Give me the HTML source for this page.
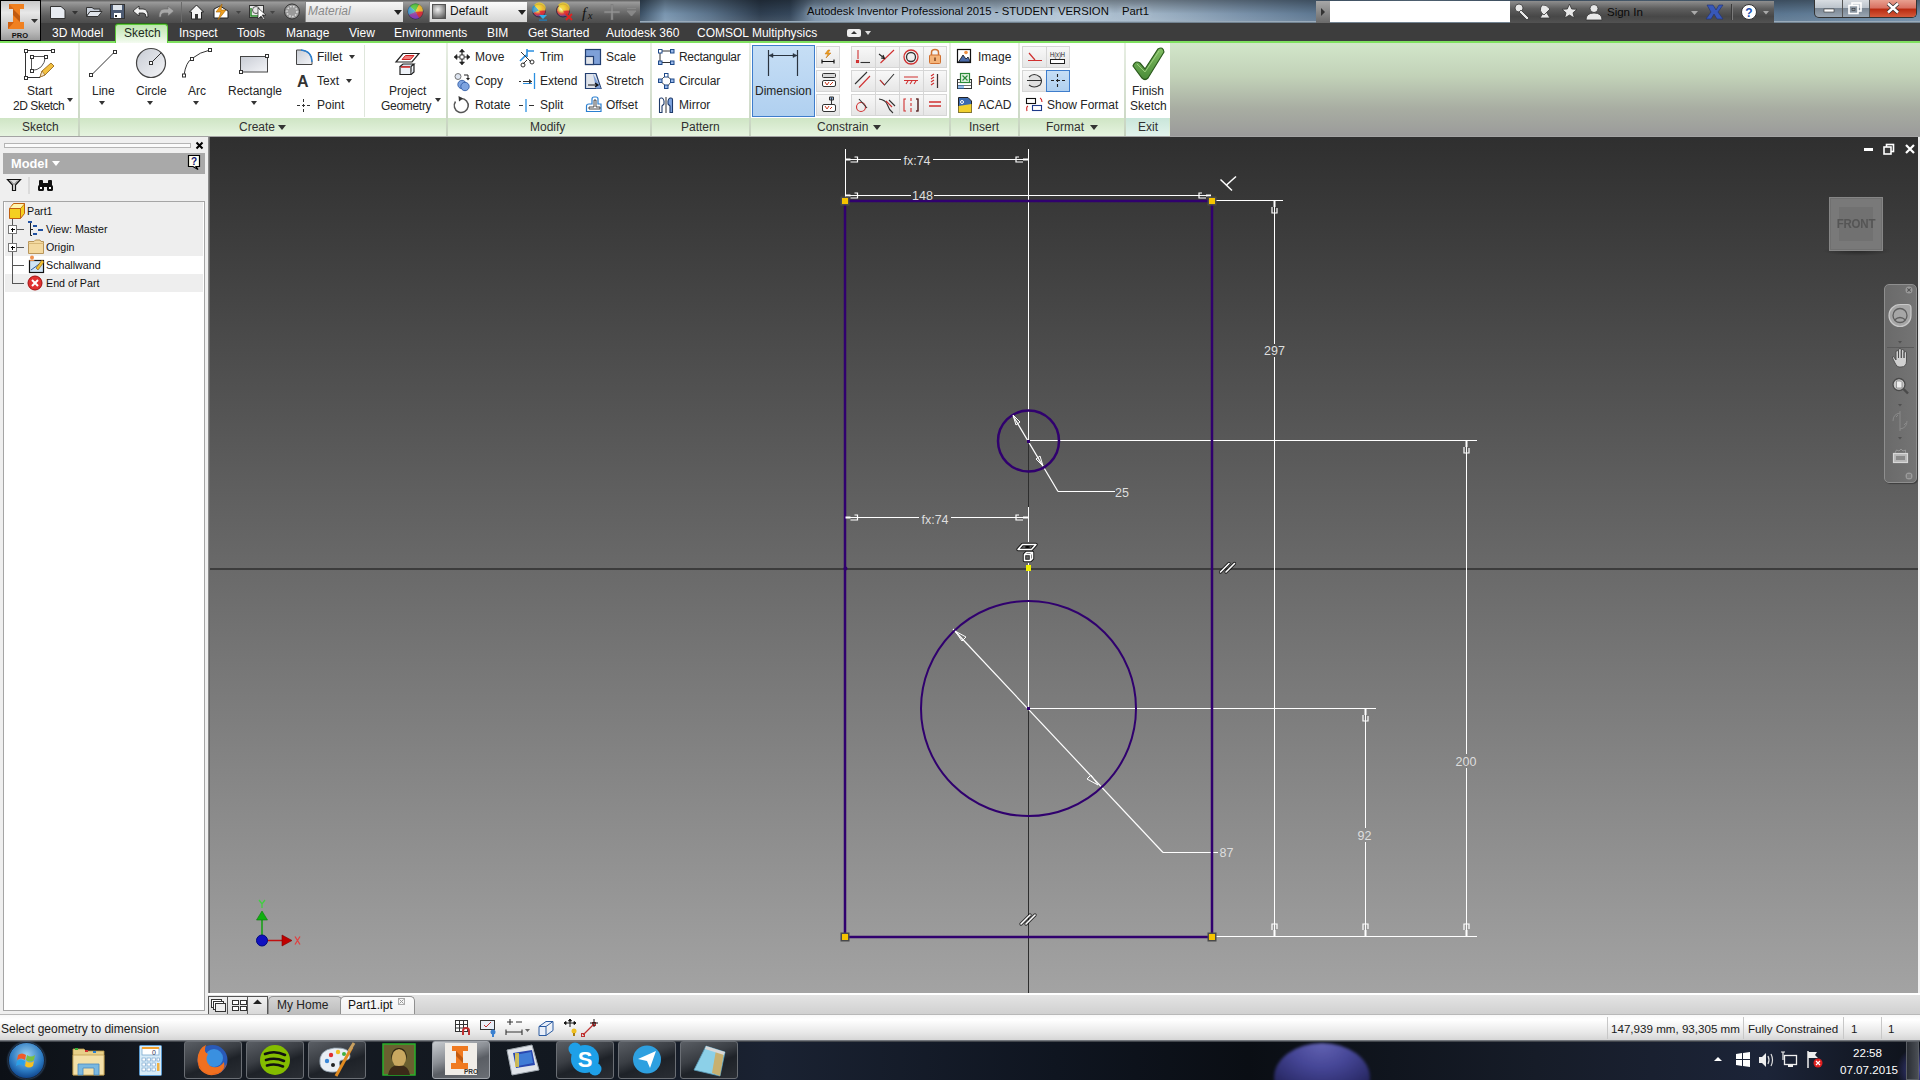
<!DOCTYPE html>
<html><head><meta charset="utf-8">
<style>
*{margin:0;padding:0;box-sizing:border-box}
html,body{width:1920px;height:1080px;overflow:hidden;font-family:"Liberation Sans",sans-serif;background:#000;position:relative}
.a{position:absolute}
svg{overflow:visible}
.tab{position:absolute;top:24px;height:19px;line-height:19px;font-size:12px;color:#fff;white-space:nowrap}
.t{position:absolute;font-size:12px;color:#252525;white-space:nowrap;line-height:15px;height:15px;margin-top:1px}
.lbl{position:absolute;top:118px;height:18px;line-height:18px;font-size:12px;color:#303030;white-space:nowrap}
.sep{position:absolute;width:1px;top:45px;height:72px;background:#dfe6dc}
.psep{position:absolute;width:2px;top:43px;height:93px;background:linear-gradient(#e8efe4,#c6d3bf)}
.dd{position:absolute;width:0;height:0;border-left:3.5px solid transparent;border-right:3.5px solid transparent;border-top:4px solid #333}
.sb{position:absolute;width:24px;height:22px;background:linear-gradient(#f8f8f8,#e6e6e6);border:1px solid #d6d6d6}
</style></head><body>

<!-- title bar -->
<div class="a" style="left:0;top:0;width:1920px;height:23px;background:linear-gradient(90deg,#3b4e62 0%,#2a3a4b 40%,#5c7893 60%,#3a4d61 70%,#5e7c98 82%,#4f6a85 92%,#6f8fad 100%)"></div>
<div class="a" style="left:640px;top:0;width:1280px;height:23px;background:linear-gradient(90deg,#3a4f64 0px,#7a96b0 25px,#5a728a 70px,#2e3e50 120px,#34465a 150px,#7890a8 175px,#a2b6c8 230px,#98aec2 330px,#b4c6d6 420px,#a0b4c6 510px,#7a92aa 600px,#5c7690 680px,#7690a8 780px,#556e88 900px,#6a86a0 1000px,#5b7690 1140px,#6e8ba6 1280px)"></div>
<div class="a" style="left:640px;top:0;width:1280px;height:23px;background:linear-gradient(rgba(0,0,0,.35),rgba(0,0,0,0) 60%,rgba(255,255,255,.1))"></div>
<div class="a" style="left:0;top:21px;width:1920px;height:2px;background:linear-gradient(#aebfce,#5f6f7d)"></div>
<div class="a" style="left:807px;top:5px;font-size:11.3px;color:#0a0a0a;white-space:nowrap;text-shadow:0 0 6px rgba(220,232,245,.8)">Autodesk Inventor Professional 2015 - STUDENT VERSION</div>
<div class="a" style="left:1122px;top:5px;font-size:11.3px;color:#0a0a0a;white-space:nowrap;text-shadow:0 0 6px rgba(220,232,245,.8)">Part1</div>
<!-- QAT -->
<div class="a" style="left:40px;top:0;width:600px;height:23px;background:linear-gradient(#5a5a5a,#9a9a9a 10%,#7c7c7c 35%,#5c5c5c 70%,#4c4c4c)"></div>
<div class="a" style="left:181px;top:2px;width:1px;height:20px;background:#2c2c2c;border-right:1px solid #6a6a6a"></div>
<!-- QAT icons -->
<svg class="a" style="left:40px;top:0" width="600" height="23" viewBox="40 0 600 23">
<g stroke="#333" stroke-width="1">
<path d="M50.5 6.5 H61 L65 10 V18.5 H50.5 Z" fill="#e8ecf2"/>
<path d="M86.5 7.5 H92 L94 9 H100 V12 H90 L86.5 16.5 Z" fill="#c9d0da"/>
<path d="M86.5 16.5 L90 11.5 H102 L98 16.5 Z" fill="#dfe4ea"/>
<rect x="110.5" y="4.5" width="14" height="14" fill="#4d5b73"/>
</g>
<rect x="113" y="5" width="9" height="5" fill="#dde3ea"/><rect x="114" y="13" width="7" height="5" fill="#fff"/><rect x="115" y="15" width="2" height="2" fill="#222"/>
<path d="M72 11 H78 L75 14.5 Z" fill="#333"/>
<path d="M139 6 L133 11 L139 16 V13 H143 Q146 13 146 17 H148 Q148 9 143 9 H139 Z" fill="#f2f2f2" stroke="#222" stroke-width="0.8"/>
<path d="M168 6 L174 11 L168 16 V13 H164 Q161 13 161 17 H159 Q159 9 164 9 H168 Z" fill="#a8a8a8" stroke="#6a6a6a" stroke-width="0.6"/>
<path d="M189.5 12 L196.5 5 L203.5 12 H201.5 V19 H191.5 V12 Z" fill="#f4f4f4" stroke="#222" stroke-width="1"/>
<rect x="195" y="14" width="3" height="5" fill="#333"/>
<path d="M214 9 L220 6 L228 11 V18 H214 Z" fill="#fff" stroke="#222" stroke-width="1"/>
<path d="M222 4 L216 12 H221 L218 20 L226 10 H221 Z" fill="#f0a020" stroke="#a06000" stroke-width="0.6"/>
<path d="M236 11 H241 L238.5 14 Z" fill="#444"/>
<rect x="249.5" y="5.5" width="14" height="12" fill="#e8e8e8" stroke="#333"/>
<path d="M251 8 V16 H258" stroke="#2a8a2a" stroke-width="1.5" fill="none"/>
<circle cx="256" cy="10" r="3.5" fill="none" stroke="#555"/>
<path d="M258 8 L258 19 L261 16 L264 20 L265 19 L262 15 L266 15 Z" fill="#fff" stroke="#222" stroke-width="0.7"/>
<path d="M270 11 H275 L272.5 14 Z" fill="#444"/>
<circle cx="292" cy="11.5" r="7.5" fill="#9a9a9a" stroke="#333"/>
<circle cx="292" cy="11.5" r="5" fill="none" stroke="#e0e0e0" stroke-dasharray="1.5 1.5" stroke-width="1.5"/>
</g>
</svg>
<!-- material dropdown -->
<div class="a" style="left:305px;top:2px;width:98px;height:20px;background:linear-gradient(#f6f6f6,#d4d4d4);border-left:1px solid #888"></div>
<div class="a" style="left:308px;top:4px;font-size:12px;font-style:italic;color:#8a8a8a">Material</div>
<div class="dd" style="left:394px;top:10px;border-top-color:#222;border-left-width:4px;border-right-width:4px;border-top-width:5px"></div>
<svg class="a" style="left:405px;top:2px" width="22" height="20">
<defs><radialGradient id="cw" cx=".4" cy=".35" r=".7"><stop offset="0" stop-color="#fff"/><stop offset=".3" stop-color="#e8e060"/><stop offset=".6" stop-color="#e04040"/><stop offset="1" stop-color="#3040c0"/></radialGradient></defs>
<circle cx="10.5" cy="9.5" r="7.5" fill="url(#cw)" stroke="#223" stroke-width=".8"/>
<path d="M10.5 9.5 L18 9.5 A7.5 7.5 0 0 1 14 16 Z" fill="#e03030" opacity=".8"/>
<path d="M10.5 9.5 L14 16 A7.5 7.5 0 0 1 4 13 Z" fill="#8040c0" opacity=".8"/>
<path d="M10.5 9.5 L4 13 A7.5 7.5 0 0 1 5 4 Z" fill="#30a0e0" opacity=".8"/>
<path d="M10.5 9.5 L5 4 A7.5 7.5 0 0 1 14 2.5 Z" fill="#40c040" opacity=".8"/>
<path d="M10.5 9.5 L14 2.5 A7.5 7.5 0 0 1 18 9.5 Z" fill="#f0d030" opacity=".8"/>
</svg>
<div class="a" style="left:429px;top:2px;width:98px;height:20px;background:linear-gradient(#fbfbfb,#d6d6d6);border-left:1px solid #888"></div>
<div class="a" style="left:432px;top:4px;width:14px;height:15px;background:radial-gradient(circle at 40% 35%,#f0f0f0,#8a8a8a 60%,#4a4a4a);border:1px solid #555"></div>
<div class="a" style="left:450px;top:4px;font-size:12px;color:#111">Default</div>
<div class="dd" style="left:518px;top:10px;border-top-color:#222;border-left-width:4px;border-right-width:4px;border-top-width:5px"></div>
<svg class="a" style="left:530px;top:2px" width="110" height="20">
<circle cx="9" cy="8.5" r="6.5" fill="url(#cw)" stroke="#223" stroke-width=".8"/>
<path d="M9 8.5 L15.5 8.5 A6.5 6.5 0 0 1 12 14 Z" fill="#e03030" opacity=".8"/>
<path d="M9 8.5 L3 11 A6.5 6.5 0 0 1 4 3 Z" fill="#30a0e0" opacity=".8"/>
<path d="M9 8.5 L4 3 A6.5 6.5 0 0 1 15.5 8.5 Z" fill="#f0d030" opacity=".8"/>
<path d="M9 13 H17 L13 17 Z" fill="#30b0e8"/><rect x="9" y="17.5" width="8" height="1.2" fill="#2080c0"/>
<circle cx="33" cy="8.5" r="6.5" fill="url(#cw)" stroke="#223" stroke-width=".8"/>
<path d="M33 8.5 L39.5 8.5 A6.5 6.5 0 0 1 36 14 Z" fill="#e03030" opacity=".8"/>
<path d="M33 8.5 L28 3 A6.5 6.5 0 0 1 39.5 8.5 Z" fill="#f0d030" opacity=".8"/>
<path d="M36 12 L42 18 M42 12 L36 18" stroke="#e02020" stroke-width="1.8"/>
<text x="52" y="16" font-family="Liberation Serif" font-style="italic" font-size="15" fill="#111">f</text>
<text x="58" y="17" font-family="Liberation Serif" font-style="italic" font-size="10" fill="#111">x</text>
<path d="M82 2 V18 M74 10 H90" stroke="#777" stroke-width="2.5"/><path d="M82 2.5 V17.5 M74.5 10 H89.5" stroke="#999" stroke-width="1"/>
<path d="M97 6.5 H106 M97 9 H106 L101.5 14 Z" stroke="#888" fill="#888" stroke-width="1"/>
</svg>
<!-- app button -->
<div class="a" style="left:0;top:0;width:41px;height:41px;background:linear-gradient(#c8c8c8,#e8e8e8 30%,#b8b8b8 80%,#9a9a9a);border:1px solid #000;z-index:3"></div>
<svg class="a" style="left:0;top:0;z-index:4" width="41" height="41">
<path d="M9 4 H24 V9 H20 V22 H24 V29 H8 V22 H13 V9 H9 Z" fill="#f08020"/>
<path d="M13 9 L20 16 V22 L13 15 Z" fill="#c05a10"/><path d="M9 4 L14 9 H9 Z" fill="#d86a18"/><path d="M8 29 L14 22 H8 Z" fill="#d06010"/>
<path d="M31 19 H38 L34.5 23 Z" fill="#333"/>
<text x="20" y="37.5" font-family="Liberation Sans" font-weight="bold" font-size="7.5" fill="#111" text-anchor="middle">PRO</text>
</svg>
<!-- search -->
<div class="a" style="left:1316px;top:1px;width:14px;height:22px;background:linear-gradient(#a8a8a8,#6a6a6a)"></div>
<div class="a" style="left:1321px;top:8px;width:0;height:0;border-top:4px solid transparent;border-bottom:4px solid transparent;border-left:4px solid #333"></div>
<div class="a" style="left:1330px;top:1px;width:180px;height:21px;background:#fff"></div>
<!-- infocenter -->
<div class="a" style="left:1510px;top:1px;width:264px;height:22px;background:linear-gradient(#8e8e8e,#5e5e5e 35%,#474747 70%,#525252)"></div>
<svg class="a" style="left:1510px;top:1px" width="264" height="22">
<g fill="#e8e8e8" stroke="#333" stroke-width=".8">
<circle cx="9" cy="7" r="4"/><path d="M11 9 L19 17 L17 19 L9 11 Z"/>
<path d="M30 17 L35 9 L40 17 Z"/><path d="M32 4 Q28 10 34 14 L40 8 Q36 3 32 4 Z"/>
<path d="M59.5 3 L61.7 8 L67 8.3 L63 11.8 L64.3 17 L59.5 14 L54.7 17 L56 11.8 L52 8.3 L57.3 8 Z"/>
<circle cx="84" cy="7.5" r="4"/><path d="M76 19 Q76 12 84 12 Q92 12 92 19 Z"/>
</g>
<path d="M181 10 H188 L184.5 14 Z" fill="#aaa"/>
<path d="M197 4 H203 L206 9 L209 4 H213 L208 11 L213 18 H207 L204 13 L201 18 H196 L201 11 Z" fill="#3858b8" stroke="#203070" stroke-width=".6"/>
<rect x="221" y="3" width="1" height="16" fill="#3a3a3a"/><rect x="222" y="3" width="1" height="16" fill="#7a7a7a"/>
<circle cx="239" cy="11" r="7.5" fill="#fff" stroke="#333" stroke-width="1"/>
<text x="239" y="15.5" font-family="Liberation Sans" font-weight="bold" font-size="12" fill="#2050b0" text-anchor="middle">?</text>
<path d="M253 10 H259 L256 13.5 Z" fill="#aaa"/>
</svg>
<div class="a" style="left:1607px;top:6px;font-size:11.5px;color:#0a0a0a;white-space:nowrap">Sign In</div>
<!-- window buttons -->
<div class="a" style="left:1814px;top:0;width:103px;height:18px;border:1px solid #333;border-top:none;border-radius:0 0 5px 5px;overflow:hidden;background:linear-gradient(#d8dde2,#bcc4cc 45%,#7b8794 50%,#9aa6b2)">
<div class="a" style="left:54px;top:0;width:48px;height:18px;background:linear-gradient(#e8a090,#d87060 45%,#b82a10 50%,#d86040)"></div>
<div class="a" style="left:27px;top:0;width:1px;height:18px;background:#555"></div>
<div class="a" style="left:54px;top:0;width:1px;height:18px;background:#555"></div>
</div>
<svg class="a" style="left:1814px;top:0" width="103" height="18">
<rect x="10" y="9" width="10" height="3" fill="#fff" stroke="#333" stroke-width=".6"/>
<rect x="38" y="3" width="9" height="8" fill="none" stroke="#fff" stroke-width="1.6"/>
<rect x="35" y="5.5" width="9" height="8" fill="#8a96a2" stroke="#fff" stroke-width="1.6"/>
<rect x="38" y="8.5" width="3" height="2" fill="none" stroke="#333" stroke-width=".6"/>
<path d="M74 3.5 L84 12.5 M84 3.5 L74 12.5" stroke="#333" stroke-width="4"/>
<path d="M74 3.5 L84 12.5 M84 3.5 L74 12.5" stroke="#fff" stroke-width="2.4"/>
</svg>
<!-- tab bar -->
<div class="a" style="left:0;top:23px;width:1920px;height:19px;background:#3d3d3d"></div>
<div class="a" style="left:0;top:41px;width:1920px;height:2px;background:#7fe060"></div>
<div class="a" style="left:115px;top:24px;width:53px;height:19px;background:linear-gradient(#bfe6b0,#e2f4da 70%,#f4fbf1);border:1px solid #5cc838;border-bottom:none;border-radius:3px 3px 0 0;box-shadow:0 -1px 0 #2a6a18"></div>
<div class="tab" style="left:52px">3D Model</div>
<div class="tab" style="left:124px;color:#1e2a1e">Sketch</div>
<div class="tab" style="left:179px">Inspect</div>
<div class="tab" style="left:237px">Tools</div>
<div class="tab" style="left:286px">Manage</div>
<div class="tab" style="left:349px">View</div>
<div class="tab" style="left:394px">Environments</div>
<div class="tab" style="left:487px">BIM</div>
<div class="tab" style="left:528px">Get Started</div>
<div class="tab" style="left:606px">Autodesk 360</div>
<div class="tab" style="left:697px">COMSOL Multiphysics</div>
<div class="a" style="left:847px;top:29px;width:14px;height:8px;background:#eee;border-radius:2px"></div>
<div class="a" style="left:851px;top:31px;width:0;height:0;border-left:3px solid transparent;border-right:3px solid transparent;border-bottom:3px solid #333"></div>
<div class="dd" style="left:865px;top:31px;border-top-color:#ddd"></div>

<!-- ribbon bg -->
<div class="a" style="left:0;top:43px;width:1920px;height:94px;background:linear-gradient(#d2e6ca,#c2d2b8 35%,#a8ada2 70%,#9a9a9a)"></div>
<div class="a" style="left:0;top:43px;width:1170px;height:75px;background:#fff"></div>
<div class="a" style="left:0;top:118px;width:1170px;height:18px;background:linear-gradient(#cfe5c5,#e6f4e0)"></div>
<div class="a" style="left:1126px;top:118px;width:43px;height:18px;background:linear-gradient(#c9e6da,#e2f3ec)"></div>
<div class="a" style="left:0;top:136px;width:1920px;height:1px;background:#a4a4a4"></div>
<!-- panel separators -->
<div class="psep" style="left:78px"></div>
<div class="psep" style="left:446px"></div>
<div class="psep" style="left:650px"></div>
<div class="psep" style="left:749px"></div>
<div class="psep" style="left:949px"></div>
<div class="psep" style="left:1018px"></div>
<div class="psep" style="left:1124px"></div>
<div class="sep" style="left:364px"></div>
<!-- labels -->
<div class="lbl" style="left:22px">Sketch</div>
<div class="lbl" style="left:239px">Create</div><div class="dd" style="left:278px;top:125px;border-left-width:4.5px;border-right-width:4.5px;border-top-width:5px"></div>
<div class="lbl" style="left:530px">Modify</div>
<div class="lbl" style="left:681px">Pattern</div>
<div class="lbl" style="left:817px">Constrain</div><div class="dd" style="left:873px;top:125px;border-left-width:4.5px;border-right-width:4.5px;border-top-width:5px"></div>
<div class="lbl" style="left:969px">Insert</div>
<div class="lbl" style="left:1046px">Format</div><div class="dd" style="left:1090px;top:125px;border-left-width:4.5px;border-right-width:4.5px;border-top-width:5px"></div>
<div class="lbl" style="left:1138px">Exit</div>
<!-- large button text -->
<div class="t" style="left:27px;top:83px">Start</div>
<div class="t" style="left:13px;top:98px;letter-spacing:-.45px">2D Sketch</div><div class="dd" style="left:67px;top:98px"></div>
<div class="t" style="left:92px;top:83px">Line</div><div class="dd" style="left:99px;top:101px"></div>
<div class="t" style="left:136px;top:83px">Circle</div><div class="dd" style="left:147px;top:101px"></div>
<div class="t" style="left:188px;top:83px">Arc</div><div class="dd" style="left:193px;top:101px"></div>
<div class="t" style="left:228px;top:83px">Rectangle</div><div class="dd" style="left:251px;top:101px"></div>
<div class="t" style="left:317px;top:49px">Fillet</div><div class="dd" style="left:349px;top:55px"></div>
<div class="t" style="left:317px;top:73px">Text</div><div class="dd" style="left:346px;top:79px"></div>
<div class="t" style="left:317px;top:97px">Point</div>
<div class="t" style="left:389px;top:83px">Project</div>
<div class="t" style="left:381px;top:98px;letter-spacing:-.3px">Geometry</div><div class="dd" style="left:435px;top:98px"></div>
<div class="t" style="left:475px;top:49px">Move</div>
<div class="t" style="left:475px;top:73px">Copy</div>
<div class="t" style="left:475px;top:97px">Rotate</div>
<div class="t" style="left:540px;top:49px">Trim</div>
<div class="t" style="left:540px;top:73px">Extend</div>
<div class="t" style="left:540px;top:97px">Split</div>
<div class="t" style="left:606px;top:49px">Scale</div>
<div class="t" style="left:606px;top:73px">Stretch</div>
<div class="t" style="left:606px;top:97px">Offset</div>
<div class="t" style="left:679px;top:49px;letter-spacing:-.3px">Rectangular</div>
<div class="t" style="left:679px;top:73px">Circular</div>
<div class="t" style="left:679px;top:97px">Mirror</div>
<!-- dimension button -->
<div class="a" style="left:752px;top:45px;width:63px;height:72px;background:linear-gradient(#c6def5,#b0d0f0);border:1px solid #3e7dcc"></div>
<div class="t" style="left:755px;top:83px">Dimension</div>
<!-- small button columns -->
<div class="sb" style="left:816px;top:46px"></div>
<div class="sb" style="left:816px;top:70px"></div>
<div class="sb" style="left:816px;top:94px"></div>
<div class="a" style="left:851px;top:46px;width:96px;height:22px;background:linear-gradient(#f8f8f8,#e6e6e6);border:1px solid #d6d6d6"></div>
<div class="a" style="left:851px;top:70px;width:96px;height:22px;background:linear-gradient(#f8f8f8,#e6e6e6);border:1px solid #d6d6d6"></div>
<div class="a" style="left:851px;top:94px;width:96px;height:22px;background:linear-gradient(#f8f8f8,#e6e6e6);border:1px solid #d6d6d6"></div>
<div class="a" style="left:875px;top:46px;width:1px;height:70px;background:#d6d6d6"></div>
<div class="a" style="left:899px;top:46px;width:1px;height:70px;background:#d6d6d6"></div>
<div class="a" style="left:923px;top:46px;width:1px;height:70px;background:#d6d6d6"></div>
<div class="t" style="left:978px;top:49px">Image</div>
<div class="t" style="left:978px;top:73px">Points</div>
<div class="t" style="left:978px;top:97px">ACAD</div>
<div class="a" style="left:1022px;top:46px;width:48px;height:22px;background:linear-gradient(#f8f8f8,#e6e6e6);border:1px solid #d6d6d6"></div>
<div class="a" style="left:1046px;top:46px;width:1px;height:22px;background:#d6d6d6"></div>
<div class="a" style="left:1022px;top:70px;width:25px;height:22px;background:linear-gradient(#f8f8f8,#e6e6e6);border:1px solid #d6d6d6"></div>
<div class="a" style="left:1046px;top:70px;width:24px;height:22px;background:linear-gradient(#c6def5,#b0d0f0);border:1px solid #3e7dcc"></div>
<div class="t" style="left:1047px;top:97px">Show Format</div>
<div class="t" style="left:1132px;top:83px">Finish</div>
<div class="t" style="left:1130px;top:98px">Sketch</div>
<!-- ribbon icons -->
<svg class="a" style="left:0;top:42px" width="1170" height="95" viewBox="0 42 1170 95">
<defs>
<linearGradient id="gg" x1="0" y1="0" x2="1" y2="1"><stop offset="0" stop-color="#c8ccd4"/><stop offset="1" stop-color="#f4f5f8"/></linearGradient>
<linearGradient id="gchk" x1="0" y1="0" x2="0" y2="1"><stop offset="0" stop-color="#82be64"/><stop offset="1" stop-color="#4a8c38"/></linearGradient>
</defs>
<g fill="none" stroke="#333" stroke-width="1">
<!-- start 2d sketch -->
<path d="M25.5 50.5 H52.5 M25.5 50.5 V77.5 H40"/>
<path d="M31.5 56.5 H45.5 M31.5 56.5 V70.5 Q44 70 45.5 56.5" stroke="#555"/>
<g fill="#fff"><rect x="24.5" y="49.5" width="3" height="3"/><rect x="51.5" y="49.5" width="3" height="3"/><rect x="24.5" y="76.5" width="3" height="3"/><rect x="30.5" y="55.5" width="3" height="3"/><rect x="44.5" y="55.5" width="3" height="3"/><rect x="30.5" y="69.5" width="3" height="3"/></g>
</g>
<path d="M40 77 L42 71 L51 63 L54 66 L45 75 Z" fill="#f2c040" stroke="#8a5a10" stroke-width=".8"/>
<path d="M40 77 L42 71 L45 75 Z" fill="#f4e0c0" stroke="#8a5a10" stroke-width=".6"/>
<g fill="none" stroke="#333" stroke-width="1">
<!-- line -->
<path d="M92 74.5 L114 52.5"/>
<rect x="89.5" y="73.5" width="3" height="3" fill="#fff"/><rect x="113.5" y="50.5" width="3" height="3" fill="#fff"/>
<!-- circle -->
<circle cx="151" cy="63" r="14.5" fill="url(#gg)" stroke="#444" stroke-width="1.2"/>
<path d="M151 63 L161 53"/><rect x="149.5" y="61.5" width="3" height="3" fill="#fff"/>
<!-- arc -->
<path d="M184 75 Q186 62 192 58.5 Q200 52 210 50"/>
<rect x="182.5" y="74" width="3" height="3" fill="#fff"/><rect x="190.5" y="57.5" width="3" height="3" fill="#fff"/><rect x="208.5" y="48.5" width="3" height="3" fill="#fff"/>
<!-- rectangle -->
<rect x="240.5" y="56.5" width="27" height="15.5" fill="url(#gg)" stroke="#444"/>
<rect x="239.5" y="70.5" width="3" height="3" fill="#fff"/><rect x="265.5" y="54.5" width="3" height="3" fill="#fff"/>
<!-- fillet -->
<path d="M296.5 64.5 V50 H301 Q312 51 312 62 V64.5 Z" fill="url(#gg)" stroke="#444"/>
<path d="M301 50 Q312 51 312 62" stroke="#2a7fd0" stroke-width="1.3"/>
<!-- point -->
<path d="M297 105.5 H300 M302 105.5 H305 M307 105.5 H310 M303.5 99 V102 M303.5 104 V107 M303.5 109 V112" stroke="#333"/>
</g>
<text x="297" y="87" font-family="Liberation Sans" font-weight="bold" font-size="16" fill="#333">A</text>
<!-- project geometry -->
<path d="M396 62 L403 53.5 H419 L412 62 Z" fill="#fff" stroke="#222" stroke-width="1.2"/>
<path d="M402 59.5 L405.5 55.5 H414 L410.5 59.5 Z" fill="#f08080" stroke="#d02020" stroke-width="1"/>
<path d="M400 66.5 H411 V74.5 H400 Z" fill="#eef2f8" stroke="#222" stroke-width="1.2"/>
<path d="M400 66.5 L403 64 H414 L411 66.5 M414 64 V72 L411 74.5" fill="#dde4ee" stroke="#222" stroke-width="1.2"/>
<path d="M401 67 H410" stroke="#d02020" stroke-width="1.5"/>
<!-- move -->
<g stroke="#222" stroke-width="1.2" fill="#222">
<path d="M462 50 V64 M455 57 H469" fill="none"/>
<path d="M462 49 L459.5 52 H464.5 Z M462 65 L459.5 62 H464.5 Z M454 57 L457 54.5 V59.5 Z M470 57 L467 54.5 V59.5 Z" stroke-width=".6"/>
</g>
<rect x="460" y="55" width="4" height="4" fill="#fff" stroke="#222" stroke-width=".8"/>
<!-- copy -->
<circle cx="458" cy="76.5" r="3" fill="#dde4f0" stroke="#555" stroke-width=".8"/>
<circle cx="462" cy="84.5" r="4.2" fill="#7ea4e0" stroke="#2a55a0" stroke-width=".8"/>
<circle cx="465" cy="86.5" r="4.2" fill="#7ea4e0" stroke="#2a55a0" stroke-width=".8"/>
<path d="M464 75 H468 V79" fill="none" stroke="#222" stroke-width="1"/><path d="M466 78 L468 80.5 L470 78 Z" fill="#222"/>
<!-- rotate -->
<path d="M461 98.5 A7 7 0 1 1 455.5 101.5" fill="none" stroke="#555" stroke-width="1.5"/>
<path d="M458.5 96 L463 98.5 L459 101.5 Z" fill="#333"/>
<!-- trim -->
<path d="M520 61 L526 55 M527 49 V57 M527 51 H534" stroke="#2a8fe0" stroke-width="1.6" fill="none"/>
<path d="M521 52 L531 62 M527 60 L523 64" stroke="#333" stroke-width="1" fill="none"/>
<circle cx="532" cy="62" r="2" fill="none" stroke="#333"/><circle cx="523" cy="65" r="2" fill="none" stroke="#333"/>
<!-- extend -->
<path d="M519 81.5 H521 M523 81.5 H532" stroke="#333" stroke-width="1.2"/><path d="M523 83.5 H532" stroke="#2a8fe0"/>
<path d="M529 79 L532 81.5 L529 84" fill="#333"/>
<path d="M534.5 73 V89" stroke="#2a8fe0" stroke-width="1.3"/>
<!-- split -->
<path d="M519 105.5 H523 M529 105.5 H534" stroke="#333" stroke-width="1.2"/><path d="M526 99 V112" stroke="#2a8fe0" stroke-width="1.3"/>
<!-- scale -->
<rect x="585.5" y="49.5" width="15" height="15" fill="#7ea0d8" stroke="#223e70" stroke-width="1.2"/>
<rect x="585.5" y="56.5" width="8" height="8" fill="#e0e4ea" stroke="#223e70" stroke-width="1.2"/>
<!-- stretch -->
<path d="M585.5 73.5 H596 L601 88.5 H585.5 Z" fill="#dfe3ea" stroke="#223e70" stroke-width="1.2"/>
<path d="M593 73.5 L601 88.5 H596 Z" fill="#7ea0d8"/>
<path d="M588 85 H597 M595 83 L598 85 L595 87" stroke="#111" stroke-width="1.2" fill="none"/>
<!-- offset -->
<path d="M586.5 111.5 V106 Q586.5 104 589 104 H592 V99 Q592 97 594 97 H596 Q598 97 598 99 V104 H601 V111.5 Z" fill="none" stroke="#2a7fd0" stroke-width="1.2"/>
<path d="M589 109 V107 H594 V100 H596 V107 H600 V109 Z" fill="none" stroke="#333" stroke-width=".9"/>
<!-- rectangular pattern -->
<g stroke="#1e4a8a" stroke-width="1" fill="#9ab8e8">
<path d="M660 51 H672 M660 51 V62.5 H672" fill="none" stroke="#333"/>
<rect x="658.5" y="49.5" width="3.5" height="3.5" fill="#fff"/><rect x="670.5" y="49.5" width="3.5" height="3.5"/><rect x="658.5" y="61" width="3.5" height="3.5"/><rect x="670.5" y="61" width="3.5" height="3.5"/>
<!-- circular -->
<path d="M666 75 L672 80.5 L667 87 L660 81 Z" fill="none" stroke="#555"/>
<rect x="664.5" y="73.5" width="3.5" height="3.5" fill="#fff"/><rect x="670.5" y="79" width="3.5" height="3.5"/><rect x="664.5" y="85" width="3.5" height="3.5"/><rect x="658.5" y="79" width="3.5" height="3.5"/>
</g>
<!-- mirror -->
<path d="M659.5 112.5 V99.5 Q659.5 98 661 98 H662 Q663.5 98.5 664 101 V104 L662 106 V112.5 Z" fill="#fff" stroke="#1e3a6a" stroke-width="1.1"/>
<path d="M672.5 112.5 V99.5 Q672.5 98 671 98 H670 Q668.5 98.5 668 101 V104 L670 106 V112.5 Z" fill="#7ea4e0" stroke="#1e3a6a" stroke-width="1.1"/>
<path d="M666 97 V113" stroke="#333" stroke-width="1"/>
<!-- dimension icon -->
<g stroke="#2a3440" stroke-width="1.2" fill="#2a3440">
<path d="M768.5 50 V76 M797.5 50 V76 M769 55.5 H797" fill="none"/>
<path d="M769 55.5 L773 53.5 V57.5 Z M797 55.5 L793 53.5 V57.5 Z" stroke-width=".5"/>
</g>
<!-- small col icons -->
<path d="M828 50 L825 54 H828 L826 58 L831 53 H828 L830 50 Z" fill="#f0a020" stroke="#c07010" stroke-width=".5"/>
<path d="M822 61.5 H834 M822 59.5 V63.5 M834 59.5 V63.5" stroke="#111" stroke-width="1.2" fill="none"/>
<rect x="822.5" y="73.5" width="13" height="4" rx="1" fill="#d8d8d8" stroke="#333" stroke-width="1"/>
<rect x="822.5" y="80.5" width="13" height="6" rx="1.5" fill="#fff" stroke="#333" stroke-width="1"/>
<path d="M825 82 L827 85 L829 82 M830 85 L833 82" stroke="#c83a20" stroke-width="1" fill="none"/>
<rect x="822.5" y="104.5" width="13" height="7" rx="1.5" fill="#fff" stroke="#333" stroke-width="1"/>
<path d="M825 106 L827 109 L829 106 M830 109 L832 107" stroke="#c83a20" stroke-width="1" fill="none"/>
<path d="M831.5 105 V97.5 M829.5 97 H833.5 V100 H829.5 Z" stroke="#333" stroke-width="1" fill="#8ab0e0"/>
<!-- constraint grid -->
<g fill="none" stroke="#d03030" stroke-width="1.1">
<path d="M858 50 V59"/><rect x="856.5" y="60.5" width="2" height="2"/><path d="M860.5 62.5 H870" stroke="#333"/>
<path d="M880.5 63 L894 50"/>
<path d="M879 54 L884 58" stroke="#222"/><path d="M883 55 L884.5 58.5 L881 58" stroke="#222"/>
<circle cx="911" cy="57" r="7" stroke-width="1.3"/><circle cx="911" cy="57" r="4.5" stroke="#333" stroke-width="1.3"/>
<path d="M855 84 L867 72" stroke="#333"/><path d="M859 87.5 L870 76"/>
<path d="M880 80 L884.5 85 L894 74" stroke="#333"/><path d="M880 80 L884.5 85"/>
<path d="M904 77 H918 M904 80.5 H918 M906 84 L908 81 M910 84 L912 81 M914 84 L916 81"/>
<path d="M937.5 74 V88 M931 76 L934 74 M931 79 L934 77 M931 82 L934 80 M931 85 L934 83" stroke-width="1.2"/><path d="M937.5 74 V88" stroke="#333"/>
<circle cx="861" cy="107" r="4.5"/><path d="M859 99 L867 108" stroke="#333"/>
<path d="M879 99 Q886 100 887.5 105 Q889 110 893 113 M889 100 L895 106" stroke="#333"/><path d="M886 101 L892 107"/>
<path d="M906 99 H904 V111 H906 M916 99 H918 V111 H916" stroke="#d03030"/><path d="M911 98 V101 M911 103 V106 M911 108 V112" stroke="#d03030"/><path d="M916 99 H918 V111 H916" stroke="#333"/>
<path d="M929 102 H941 M929 106 H941" stroke-width="1.3"/>
</g>
<path d="M931.5 55 V52.5 Q931.5 49.5 935 49.5 Q938.5 49.5 938.5 52.5 V55" fill="none" stroke="#d07030" stroke-width="1.5"/>
<rect x="929.5" y="55" width="11" height="8.5" rx="1" fill="#f4b47a" stroke="#d07030" stroke-width="1"/>
<path d="M935 57.5 V61" stroke="#6a3010" stroke-width="1.3"/>
<!-- image/points/acad -->
<rect x="957.5" y="49.5" width="13" height="13" fill="#fff" stroke="#111" stroke-width="1.2"/>
<path d="M958.5 62 L963 55 L966 59 L968 57 L970 61 V62 Z" fill="#4a6aa8" stroke="#111" stroke-width=".8"/>
<circle cx="966" cy="52.5" r="1.8" fill="#f09040"/>
<rect x="957.5" y="79.5" width="14" height="9" fill="#fff" stroke="#333" stroke-width="1"/>
<path d="M958 82.5 H971 M958 85.5 H971" stroke="#333" stroke-width=".7"/>
<rect x="960.5" y="73.5" width="9" height="9" fill="#e4f4e4" stroke="#2a8a3a" stroke-width="1.2"/>
<path d="M962.5 75.5 L967.5 80.5 M967.5 75.5 L962.5 80.5" stroke="#2a8a3a" stroke-width="1.2"/>
<path d="M958 86 H964 M958 88 H964" stroke="#2a7ad0" stroke-width="1.2"/>
<path d="M958.5 97.5 H968 L971.5 101 V112.5 H958.5 Z" fill="#3a6ab0" stroke="#222" stroke-width="1"/>
<path d="M958.5 106 L971.5 104 V112.5 H958.5 Z" fill="#f0d030"/>
<circle cx="962" cy="102" r="1.5" fill="none" stroke="#fff"/>
<!-- format icons -->
<path d="M1029 53 L1035 60 M1028 60.5 H1042" stroke="#d03030" stroke-width="1.2" fill="none"/>
<text x="1050" y="56.5" font-family="Liberation Sans" font-size="7.5" fill="#222" textLength="15" lengthAdjust="spacingAndGlyphs">H(x)H</text>
<rect x="1050.5" y="59.5" width="14" height="4" fill="#fff" stroke="#222" stroke-width="1"/>
<path d="M1027 80.5 H1042 M1029 77 Q1034 72 1040 77 Q1043 81 1040 85 Q1034 89 1029 85" fill="#e0e0e0" stroke="#333" stroke-width="1.1"/>
<path d="M1051 80.5 H1054 M1056 80.5 H1060 M1062 80.5 H1065 M1057.5 74 V77 M1057.5 79 V82 M1057.5 84 V87" stroke="#222" stroke-width="1.1"/>
<rect x="1026.5" y="98.5" width="9" height="5" fill="#fff" stroke="#111" stroke-width="1.1"/>
<rect x="1032.5" y="105.5" width="9" height="5" fill="#fff" stroke="#1e3a8a" stroke-width="1.1"/>
<path d="M1040 98 Q1042 99 1042 102 M1028 106 Q1026 107 1027 111" stroke="#d02020" stroke-width="1.1" fill="none"/>
<!-- finish check -->
<path d="M1133 66 Q1135 60 1140 63 L1145 69 L1158 49 Q1163 46 1164 52 L1148 78 Q1145 81 1142 78 Z" fill="url(#gchk)" stroke="#2a5a1c" stroke-width="1.2"/>
<path d="M1137 64 L1145 72 L1159 51" fill="none" stroke="#b0e090" stroke-width="1" opacity=".7"/>
</svg>

<!-- browser panel -->
<div class="a" style="left:0;top:137px;width:208px;height:878px;background:#efefef"></div>
<div class="a" style="left:208px;top:137px;width:2px;height:856px;background:linear-gradient(90deg,#9a9a9a,#5a5a5a)"></div>
<div class="a" style="left:4px;top:143px;width:187px;height:5px;border:1px solid #b4b4b4;background:#fafafa"></div>
<svg class="a" style="left:194px;top:140px" width="12" height="12"><path d="M2.5 2.5 L8.5 8.5 M8.5 2.5 L2.5 8.5" stroke="#000" stroke-width="2"/></svg>
<div class="a" style="left:3px;top:153px;width:202px;height:21px;background:#a9a9a9"></div>
<div class="a" style="left:11px;top:155px;font-size:12.8px;font-weight:bold;color:#fff;line-height:17px">Model</div>
<div class="a" style="left:52px;top:161px;width:0;height:0;border-left:4px solid transparent;border-right:4px solid transparent;border-top:5px solid #fff"></div>
<svg class="a" style="left:187px;top:154px" width="16" height="18">
<path d="M1.5 1.5 H12.5 V12.5 H9 L11 15.5 L6 12.5 H1.5 Z" fill="#fffff0" stroke="#000" stroke-width="1.2"/>
<text x="7" y="11" font-family="Liberation Sans" font-weight="bold" font-size="10" fill="#101070" text-anchor="middle">?</text>
</svg>
<svg class="a" style="left:5px;top:176px" width="60" height="20">
<path d="M2.5 3.5 H15.5 L10.5 9 V14.5 H7.5 V9 Z" fill="#ddd" stroke="#111" stroke-width="1.2"/>
<path d="M5 4.5 L9 8.5 L13 4.5" fill="none" stroke="#555" stroke-width=".8"/>
<rect x="23.5" y="1" width="1" height="17" fill="#c8c8c8"/>
<g fill="#111"><rect x="34" y="4" width="4" height="11" rx="1"/><rect x="43" y="4" width="4" height="11" rx="1"/><rect x="37" y="7" width="7" height="4"/><rect x="33" y="9" width="6" height="6" rx="1.5"/><rect x="42" y="9" width="6" height="6" rx="1.5"/></g>
<rect x="35" y="11" width="2" height="2" fill="#fff"/><rect x="44" y="11" width="2" height="2" fill="#fff"/>
</svg>
<!-- tree -->
<div class="a" style="left:3px;top:201px;width:202px;height:810px;background:#fff;border:1px solid #a5a5a5"></div>
<div class="a" style="left:5px;top:202px;width:198px;height:54px;background:#eeeeee"></div>
<div class="a" style="left:5px;top:274px;width:198px;height:18px;background:#eeeeee"></div>
<div class="a" style="left:27px;top:204px;font-size:10.7px;color:#111;line-height:14px">Part1</div>
<div class="a" style="left:46px;top:222px;font-size:10.7px;color:#111;line-height:14px">View: Master</div>
<div class="a" style="left:46px;top:240px;font-size:10.7px;color:#111;line-height:14px">Origin</div>
<div class="a" style="left:46px;top:258px;font-size:10.7px;color:#111;line-height:14px">Schallwand</div>
<div class="a" style="left:46px;top:276px;font-size:10.7px;color:#111;line-height:14px">End of Part</div>
<svg class="a" style="left:0;top:200px" width="60" height="95" viewBox="0 200 60 95">
<g stroke="#555" stroke-width="1" fill="none" shape-rendering="crispEdges">
<path d="M12.5 218 V283.5 H24"/>
<path d="M16 229.5 H24 M16 247.5 H24 M12.5 265.5 H24"/>
</g>
<g shape-rendering="crispEdges"><rect x="8.5" y="225.5" width="8" height="8" fill="#fff" stroke="#777"/><rect x="8.5" y="243.5" width="8" height="8" fill="#fff" stroke="#777"/>
<path d="M10.5 229.5 H14.5 M12.5 227.5 V231.5 M10.5 247.5 H14.5 M12.5 245.5 V249.5" stroke="#000"/></g>
<!-- cube -->
<path d="M9.5 208.5 L13.5 203.5 H24.5 V213.5 L20.5 218.5 H9.5 Z" fill="#f4d020" stroke="#c06010" stroke-width="1"/>
<path d="M9.5 208.5 H20.5 V218.5 M20.5 208.5 L24.5 203.5" fill="none" stroke="#c06010" stroke-width="1"/>
<path d="M10 208 L14 204 H24 L20.5 208 Z" fill="#fff6b0"/>
<!-- view icon -->
<g fill="#2050a0"><rect x="28" y="221" width="4" height="2"/><rect x="33" y="225" width="4" height="2"/><rect x="38" y="229" width="5" height="2"/><rect x="33" y="233" width="4" height="2"/></g>
<path d="M30.5 223 V235.5 H32 M30.5 229.5 H33" stroke="#222" stroke-width="1" fill="none"/>
<!-- folder -->
<path d="M28.5 241.5 H34 L35.5 240 H40 L41 241.5 H43.5 V253.5 H28.5 Z" fill="#f3d9a0" stroke="#b8955a" stroke-width="1"/>
<path d="M28.5 243.5 H43.5" stroke="#d8b878" stroke-width="1"/>
<!-- sketch icon -->
<rect x="29.5" y="260.5" width="14" height="12" fill="#cfe4f4" stroke="#111" stroke-width="1.2"/>
<path d="M31 270 L42 262" stroke="#2a5aa0" stroke-width="1"/>
<path d="M36 268 L42 260 L44 262 L38 270 Z" fill="#f0c030" stroke="#805010" stroke-width=".6"/>
<circle cx="32" cy="257.5" r="2" fill="#f09050"/><path d="M29 261 Q32 258 35 261" fill="#f09050"/>
<!-- end of part -->
<circle cx="35" cy="283" r="7" fill="#e03030" stroke="#a01010" stroke-width="1"/>
<path d="M32 280 L38 286 M38 280 L32 286" stroke="#fff" stroke-width="2"/>
</svg>

<svg id="cv" class="a" style="left:210px;top:137px" width="1710" height="856" viewBox="210 137 1710 856">
<defs><linearGradient id="cg" x1="0" y1="0" x2="0" y2="1"><stop offset="0" stop-color="#2f2f2f"/><stop offset="1" stop-color="#a3a3a3"/></linearGradient></defs>
<rect x="210" y="137" width="1710" height="856" fill="url(#cg)"/>
<g shape-rendering="crispEdges">
<!-- axes -->
<line x1="210" y1="568.5" x2="1920" y2="568.5" stroke="#3c3c3c" stroke-width="2"/>
<line x1="1028.5" y1="137" x2="1028.5" y2="993" stroke="#2e2e2e" stroke-width="1"/>
<!-- white construction segments on center line -->
<line x1="1028.5" y1="149" x2="1028.5" y2="441" stroke="#fff" stroke-width="1"/>
<line x1="1028.5" y1="507" x2="1028.5" y2="542" stroke="#fff" stroke-width="1"/><line x1="1028.5" y1="563" x2="1028.5" y2="708" stroke="#fff" stroke-width="1"/><line x1="1028.5" y1="542" x2="1028.5" y2="563" stroke="#6a6a6a" stroke-width="1"/>
<!-- extension lines -->
<line x1="845.5" y1="149" x2="845.5" y2="200" stroke="#fff"/>
<line x1="1212" y1="200.5" x2="1283" y2="200.5" stroke="#fff"/>
<line x1="1212" y1="936.5" x2="1477" y2="936.5" stroke="#fff"/>
<line x1="1030" y1="440.5" x2="1477" y2="440.5" stroke="#fff"/>
<line x1="1030" y1="708.5" x2="1376" y2="708.5" stroke="#fff"/>
<!-- dim lines -->
<line x1="846" y1="159.5" x2="901" y2="159.5" stroke="#fff"/><line x1="933" y1="159.5" x2="1028" y2="159.5" stroke="#fff"/>
<line x1="846" y1="195.5" x2="911" y2="195.5" stroke="#fff"/><line x1="934" y1="195.5" x2="1211" y2="195.5" stroke="#fff"/>
<line x1="846" y1="517.5" x2="919" y2="517.5" stroke="#fff"/><line x1="951" y1="517.5" x2="1028" y2="517.5" stroke="#fff"/>
<line x1="1274.5" y1="201" x2="1274.5" y2="344" stroke="#fff"/><line x1="1274.5" y1="357" x2="1274.5" y2="936" stroke="#fff"/>
<line x1="1365.5" y1="709" x2="1365.5" y2="828" stroke="#fff"/><line x1="1365.5" y1="842" x2="1365.5" y2="936" stroke="#fff"/>
<line x1="1466.5" y1="441" x2="1466.5" y2="754" stroke="#fff"/><line x1="1466.5" y1="768" x2="1466.5" y2="936" stroke="#fff"/>
<line x1="1058" y1="491.5" x2="1115" y2="491.5" stroke="#fff"/>
<line x1="1163" y1="852.5" x2="1218" y2="852.5" stroke="#fff"/>
</g>
<!-- leaders -->
<line x1="1012" y1="414" x2="1058" y2="491.5" stroke="#fff" stroke-width="1.2"/>
<line x1="953" y1="629" x2="1163" y2="852.5" stroke="#fff" stroke-width="1.2"/>
<!-- geometry -->
<g fill="none" stroke="#30006e">
<rect x="845" y="201" width="367" height="736" stroke-width="2.5"/>
<circle cx="1028.5" cy="441" r="30.5" stroke-width="2.5"/>
<circle cx="1028.5" cy="708.5" r="107.5" stroke-width="2"/>
</g>
<g fill="none" stroke="#fff" stroke-width="1">
<path d="M845.5 159.5 H850.5" stroke-width="2"/><path d="M850.5 162.0 H857.5 V157.0 H854.5" stroke-width="1.2"/>
<path d="M1028 159.5 H1023" stroke-width="2"/><path d="M1023 162.0 H1016 V157.0 H1019" stroke-width="1.2"/>
<path d="M845.5 195.5 H850.5" stroke-width="2"/><path d="M850.5 198.0 H857.5 V193.0 H854.5" stroke-width="1.2"/>
<path d="M1211 195.5 H1206" stroke-width="2"/><path d="M1206 198.0 H1199 V193.0 H1202" stroke-width="1.2"/>
<path d="M845.5 517.5 H850.5" stroke-width="2"/><path d="M850.5 520.0 H857.5 V515.0 H854.5" stroke-width="1.2"/>
<path d="M1028 517.5 H1023" stroke-width="2"/><path d="M1023 520.0 H1016 V515.0 H1019" stroke-width="1.2"/>
<path d="M1274.5 201 V207" stroke-width="2"/><path d="M1272.0 207 V213 H1277.0 V208" stroke-width="1.2"/>
<path d="M1274.5 936 V930" stroke-width="2"/><path d="M1272.0 930 V924 H1277.0 V929" stroke-width="1.2"/>
<path d="M1365.5 709 V715" stroke-width="2"/><path d="M1363.0 715 V721 H1368.0 V716" stroke-width="1.2"/>
<path d="M1365.5 936 V930" stroke-width="2"/><path d="M1363.0 930 V924 H1368.0 V929" stroke-width="1.2"/>
<path d="M1466.5 441 V447" stroke-width="2"/><path d="M1464.0 447 V453 H1469.0 V448" stroke-width="1.2"/>
<path d="M1466.5 936 V930" stroke-width="2"/><path d="M1464.0 930 V924 H1469.0 V929" stroke-width="1.2"/>
<path d="M1013 415 L1016 425 L1020 422 Z"/>
<path d="M1043 466 L1040 456 L1036 459 Z"/>
<path d="M955 631 L962 641 L966 637 Z"/>
<path d="M1098 785 L1091 775 L1087 779 Z"/>
</g>
<!-- perpendicular symbol -->
<g stroke="#fff" stroke-width="1.5" fill="none">
<line x1="1220.5" y1="179.5" x2="1232" y2="190.5"/>
<line x1="1226.5" y1="185" x2="1236" y2="176.5"/>
</g>
<!-- parallel symbols -->
<g stroke="#000" stroke-width="3.2" stroke-linecap="round" opacity="0.7">
<line x1="1220.5" y1="572" x2="1229" y2="563.5"/><line x1="1226" y1="572" x2="1234.5" y2="563.5"/>
<line x1="1021" y1="924" x2="1030" y2="915"/><line x1="1026" y1="924" x2="1035" y2="915"/>
</g>
<g stroke="#fff" stroke-width="1.6" stroke-linecap="round">
<line x1="1220.5" y1="572" x2="1229" y2="563.5"/><line x1="1226" y1="572" x2="1234.5" y2="563.5"/>
<line x1="1021" y1="924" x2="1030" y2="915"/><line x1="1026" y1="924" x2="1035" y2="915"/>
</g>
<!-- constraint glyph -->
<g stroke="#000" stroke-width="3.4" fill="none" stroke-linejoin="round" opacity=".75">
<path d="M1022.5 544.5 H1036 L1031.5 549.5 H1018 Z"/><path d="M1024.5 554.5 H1030.5 V560.5 H1024.5 Z M1024.5 554.5 L1026.5 552.5 H1032.5 V558.5 L1030.5 560.5"/>
</g>
<g stroke="#fff" stroke-width="1.5" fill="none" stroke-linejoin="round">
<path d="M1022.5 544.5 H1036 L1031.5 549.5 H1018 Z"/><path d="M1024.5 554.5 H1030.5 V560.5 H1024.5 Z M1024.5 554.5 L1026.5 552.5 H1032.5 V558.5 L1030.5 560.5 M1030.5 554.5 L1032.5 552.5"/>
</g>
<ellipse cx="1027.5" cy="547" rx="2.5" ry="1" fill="#000"/>
<!-- points -->
<g fill="#f5c400" stroke="#4a4a4a" stroke-width="1.5">
<rect x="841.25" y="197.25" width="7.5" height="7.5"/>
<rect x="1208.25" y="197.25" width="7.5" height="7.5"/>
<rect x="841.25" y="933.25" width="7.5" height="7.5"/>
<rect x="1208.25" y="933.25" width="7.5" height="7.5"/>
</g>
<rect x="1026" y="565" width="5" height="6" fill="#f0f000"/>
<circle cx="845.5" cy="568.5" r="2" fill="#30006e"/>
<rect x="1027" y="707" width="3" height="3" fill="#30006e"/>
<rect x="1027" y="440" width="3" height="3" fill="#30006e"/>
<!-- dimension texts -->
<g font-family="Liberation Sans" font-size="12.5" fill="#dedede" text-anchor="middle">
<text x="917" y="165">fx:74</text>
<text x="922.5" y="200">148</text>
<text x="1274.5" y="355">297</text>
<text x="1122" y="496.5">25</text>
<text x="935" y="523.5">fx:74</text>
<text x="1226.5" y="857">87</text>
<text x="1364.5" y="839.5">92</text>
<text x="1466" y="766">200</text>
</g>

<g fill="#dcdcdc" font-family="Liberation Sans" font-size="13">
</g>
</svg>
<!-- canvas overlays -->
<svg class="a" style="left:1860px;top:142px" width="60" height="16">
<rect x="4" y="6" width="9" height="3" fill="#fff"/>
<rect x="26.5" y="2.5" width="7" height="7" fill="none" stroke="#fff" stroke-width="1.6"/>
<rect x="24" y="5" width="7" height="7" fill="#3a3a3a" stroke="#fff" stroke-width="1.6"/>
<path d="M46 3 L54 11 M54 3 L46 11" stroke="#fff" stroke-width="2.2"/>
</svg>
<!-- viewcube -->
<div class="a" style="left:1822px;top:246px;width:70px;height:10px;border-radius:50%;background:radial-gradient(ellipse,rgba(0,0,0,.35),rgba(0,0,0,0) 70%)"></div>
<div class="a" style="left:1829px;top:197px;width:54px;height:54px;background:#797979;border:1px solid #868686;box-shadow:inset 0 0 0 1px #707070"></div>
<div class="a" style="left:1839px;top:207px;width:34px;height:34px;background:#717171"></div>
<div class="a" style="left:1829px;top:214px;width:54px;text-align:center;font-size:11.5px;font-weight:bold;color:#555;letter-spacing:-.2px;line-height:18px;transform:scaleY(1.15)">FRONT</div>
<!-- navigation bar -->
<div class="a" style="left:1918px;top:137px;width:2px;height:856px;background:#f0f0f0"></div>
<div class="a" style="left:1884px;top:284px;width:33px;height:199px;background:linear-gradient(90deg,#6a6a6a,#747474);border:1px solid #8e8e8e;border-radius:5px;box-shadow:1px 1px 1px rgba(0,0,0,.35)"></div>
<svg class="a" style="left:1884px;top:284px" width="33" height="199">
<circle cx="25" cy="6" r="3.5" fill="#9a9a9a"/><path d="M23.3 4.3 L26.7 7.7 M26.7 4.3 L23.3 7.7" stroke="#555" stroke-width="1.1"/>
<path d="M16 20.5 A11 11 0 1 0 27 31.5 V24 Q27 20.5 23.5 20.5 Z" fill="#a6a6a6" stroke="#c8c8c8" stroke-width="1.2"/>
<circle cx="16" cy="31.5" r="7" fill="none" stroke="#5e5e5e" stroke-width="1.3"/>
<path d="M10.5 36 Q16 31 21.5 36" fill="none" stroke="#5e5e5e" stroke-width="1.2"/>
<path d="M14 57 H18 L16 59.5 Z" fill="#505050"/>
<rect x="3" y="63" width="27" height="1" fill="#5a5a5a"/>
<path d="M11 79 L8.5 74 Q8 72.5 9.5 72.5 L12 76 V68 Q12 66.5 13.3 66.5 Q14.5 66.5 14.5 68 V74 V66 Q14.5 64.5 16 64.5 Q17.3 64.5 17.3 66 V74 V67 Q17.3 65.5 18.7 65.5 Q20 65.5 20 67 V74 V69 Q20 67.5 21.3 67.5 Q22.5 67.5 22.5 69 V77 Q22.5 83 17 83 H15 Q12.5 83 11 79 Z" fill="#d0d0d0" stroke="#4a4a4a" stroke-width=".9"/>
<circle cx="15" cy="100.5" r="6" fill="#c8c8c8" stroke="#4a4a4a" stroke-width="1.3"/>
<path d="M12.5 97 H16.5 L18 98.5 V104 H12.5 Z" fill="#eee" stroke="#666" stroke-width=".6"/>
<path d="M19.5 105 L24 109.5" stroke="#4a4a4a" stroke-width="2.4"/>
<path d="M14 120 H18 L16 122.5 Z" fill="#505050"/>
<path d="M9 137 Q9 130 16 129 M23 137 Q23 144 16 145 M16 127 V147 M12 133 L14 131 M20 141 L22 139" fill="none" stroke="#8a8a8a" stroke-width="1"/>
<path d="M14 153 H18 L16 155.5 Z" fill="#505050"/>
<rect x="9.5" y="169.5" width="14" height="9" fill="#b8b8b8" stroke="#d8d8d8" stroke-width="1.2"/><rect x="12" y="172" width="9" height="4" fill="#8a8a8a"/>
<path d="M11 169 L12.5 166 L15 167 L17 165 L19 167 L21.5 166 V169" fill="none" stroke="#9a9a9a" stroke-width=".9"/>
<circle cx="25" cy="192" r="3.5" fill="#9a9a9a"/><path d="M23 191 H27 M23 193 H27" stroke="#555" stroke-width=".8"/>
</svg>
<!-- triad -->
<svg class="a" style="left:245px;top:895px" width="70" height="60">
<path d="M17 40 V24" stroke="#10a010" stroke-width="1.5"/>
<path d="M11.5 25 L17 16 L22.5 25 Z" fill="#10b010" stroke="#0a7a0a" stroke-width=".6"/>
<path d="M14 5 L17 9 L20 5 M17 9 V13" fill="none" stroke="#40d040" stroke-width="1.3"/>
<path d="M22 45.5 H37" stroke="#c01010" stroke-width="1.5"/>
<path d="M37 40 L47 45.5 L37 51 Z" fill="#c00000" stroke="#800000" stroke-width=".6"/>
<path d="M50 41.5 L55 49.5 M55 41.5 L50 49.5" stroke="#e04040" stroke-width="1.3"/>
<circle cx="17" cy="45.5" r="5.5" fill="#1010c0" stroke="#000a80" stroke-width="1"/>
</svg>
<!-- doc tabs -->
<div class="a" style="left:208px;top:993px;width:1712px;height:2px;background:#fff"></div>
<div class="a" style="left:208px;top:995px;width:1712px;height:20px;background:linear-gradient(#e4e4e4,#cfcfcf)"></div>
<div class="a" style="left:208px;top:996px;width:20px;height:19px;background:linear-gradient(#f2f2f2,#d8d8d8);border:1px solid #555"></div>
<div class="a" style="left:228px;top:996px;width:20px;height:19px;background:linear-gradient(#f2f2f2,#d8d8d8);border:1px solid #555;border-left:none"></div>
<div class="a" style="left:248px;top:996px;width:20px;height:19px;background:linear-gradient(#f2f2f2,#d8d8d8);border:1px solid #555;border-left:none"></div>
<svg class="a" style="left:208px;top:996px" width="60" height="19">
<rect x="3.5" y="3.5" width="10" height="8" fill="#fff" stroke="#333"/><rect x="5.5" y="5.5" width="10" height="8" fill="#fff" stroke="#333"/><rect x="7.5" y="7.5" width="10" height="8" fill="#eee" stroke="#333"/>
<g fill="#fff" stroke="#333"><rect x="24.5" y="4.5" width="6" height="4"/><rect x="32.5" y="4.5" width="6" height="4"/><rect x="24.5" y="10.5" width="6" height="4"/><rect x="32.5" y="10.5" width="6" height="4"/></g>
<path d="M45 8 L49.5 3.5 L54 8 Z" fill="#222"/>
</svg>
<div class="a" style="left:268px;top:996px;width:74px;height:18px;background:linear-gradient(#d4d4d4,#bdbdbd);border:1px solid #909090;border-bottom:none;border-radius:5px 5px 0 0"></div>
<div class="a" style="left:277px;top:998px;font-size:12px;color:#222;line-height:15px">My Home</div>
<div class="a" style="left:340px;top:996px;width:75px;height:19px;background:linear-gradient(#fbfbfb,#efefef);border:1px solid #909090;border-bottom:none;border-radius:5px 5px 0 0"></div>
<div class="a" style="left:348px;top:998px;font-size:12px;color:#111;line-height:15px">Part1.ipt</div>
<svg class="a" style="left:397px;top:997px" width="10" height="9"><rect x="1.5" y="1.5" width="6" height="6" fill="none" stroke="#aaa"/><path d="M2.5 2.5 L6.5 6.5 M6.5 2.5 L2.5 6.5" stroke="#999"/></svg>
<!-- browser bottom -->
<!-- status bar -->
<div class="a" style="left:0;top:1015px;width:1920px;height:25px;background:linear-gradient(#f8f8f8,#ffffff 20%,#e8e8e8 70%,#d6d6d6)"></div>
<div class="a" style="left:0;top:1014px;width:1920px;height:1px;background:#b8b8b8"></div>
<div class="a" style="left:1px;top:1022px;font-size:12px;color:#1a1a1a;line-height:15px">Select geometry to dimension</div>
<svg class="a" style="left:450px;top:1017px" width="160" height="22">
<g fill="none" stroke="#333" stroke-width="1">
<rect x="5.5" y="3.5" width="12" height="11" fill="#fff"/><path d="M5.5 7.5 H17.5 M5.5 11 H17.5 M9.5 3.5 V14.5 M13.5 3.5 V14.5"/>
</g>
<path d="M13 18 V14 Q13 11 16 11 Q19 11 19 14 V18" fill="none" stroke="#c03030" stroke-width="2"/>
<rect x="30.5" y="3.5" width="14" height="9" fill="#e8eef8" stroke="#333"/><path d="M34 8 L36 10 L41 5" stroke="#c03030" fill="none"/>
<circle cx="43" cy="15" r="2.5" fill="#3a80d0"/><rect x="42" y="15" width="2" height="5" fill="#3a80d0"/>
<path d="M57 5 H63 M60 2 V8 M66 5 H72 M56 12.5 V18 M72 12.5 V18 M56 15 H72" stroke="#333" stroke-width="1.1" fill="none"/>
<path d="M75 12 H80 L77.5 15 Z" fill="#666"/>
<path d="M89 9.5 L96 4.5 H103 L96 9.5 Z M89 9.5 V18.5 H96 V9.5 M96 18.5 L103 13.5 V4.5" fill="#e8eef8" stroke="#2a5aa0" stroke-width="1"/>
<path d="M116 6 H124 M120 2 V10 M114 6 L116 4.5 V7.5 Z M126 6 L124 4.5 V7.5 Z M120 2 L118.5 4 H121.5 Z" stroke="#111" fill="#111" stroke-width="1"/>
<circle cx="124" cy="14" r="2.5" fill="#f0c020"/><rect x="123" y="16" width="2" height="3" fill="#aa8010"/>
<path d="M133 18 L144 7" stroke="#c03030" stroke-width="1.3"/><rect x="131.5" y="16.5" width="3" height="3" fill="none" stroke="#c03030"/><rect x="142.5" y="5.5" width="3" height="3" fill="none" stroke="#c03030"/>
<path d="M144 2 V10 M140 6 H148" stroke="#111" stroke-width="1"/>
</svg>
<div class="a" style="left:1607px;top:1017px;width:1px;height:22px;background:#c8c8c8"></div>
<div class="a" style="left:1743px;top:1017px;width:1px;height:22px;background:#c8c8c8"></div>
<div class="a" style="left:1843px;top:1017px;width:1px;height:22px;background:#c8c8c8"></div>
<div class="a" style="left:1881px;top:1017px;width:1px;height:22px;background:#c8c8c8"></div>
<div class="a" style="left:1611px;top:1021px;font-size:11.6px;color:#1a1a1a;line-height:15px;white-space:nowrap">147,939 mm, 93,305 mm</div>
<div class="a" style="left:1748px;top:1021px;font-size:11.6px;color:#1a1a1a;line-height:15px;white-space:nowrap">Fully Constrained</div>
<div class="a" style="left:1851px;top:1021px;font-size:11.6px;color:#1a1a1a;line-height:15px">1</div>
<div class="a" style="left:1888px;top:1021px;font-size:11.6px;color:#1a1a1a;line-height:15px">1</div>
<!-- taskbar -->
<div class="a" style="left:0;top:1040px;width:1920px;height:40px;background:linear-gradient(90deg,#0c1016 0%,#151a22 10%,#121820 30%,#1a2232 40%,#0f1520 55%,#0a0e14 65%,#161c28 80%,#1c2438 92%,#0e121a 100%)"></div>
<div class="a" style="left:1274px;top:1043px;width:96px;height:70px;border-radius:50%;background:radial-gradient(ellipse 70px 55px at 48px 0px,#6c6cc4 0%,#4c4ca4 45%,#34347c 80%,#262660 100%);filter:blur(1.5px);opacity:.9"></div>
<div class="a" style="left:1860px;top:1040px;width:60px;height:40px;background:radial-gradient(ellipse 30px 30px at 60px 30px,#4848a8 0%,rgba(20,20,60,0) 80%)"></div>
<div class="a" style="left:0;top:1040px;width:1920px;height:2px;background:linear-gradient(#8a8e94,#2a2e34)"></div>
<!-- start orb -->
<div class="a" style="left:8px;top:1042px;width:37px;height:37px;border-radius:50%;background:radial-gradient(circle at 50% 35%,#9ad0f0,#2a78c0 55%,#0a3a80 85%);border:1px solid #1a2a40;box-shadow:0 0 2px #5a8ac0"></div>
<svg class="a" style="left:14px;top:1049px" width="26" height="24">
<path d="M4 6 Q8 3 12 6 L11 11 Q7 8 3 11 Z" fill="#f05a28"/>
<path d="M13 6 Q17 9 21 6 L20 11 Q16 14 12 11 Z" fill="#7ac040"/>
<path d="M3 12 Q7 9 11 12 L10 17 Q6 14 2 17 Z" fill="#2aa0e8"/>
<path d="M12 12 Q16 15 20 12 L19 17 Q15 20 11 17 Z" fill="#f8c020"/>
</svg>
<!-- explorer -->
<svg class="a" style="left:72px;top:1046px" width="34" height="30">
<path d="M1 3 H12 L14 5 H32 V29 H1 Z" fill="#e8cf88" stroke="#b89848" stroke-width=".8"/>
<rect x="3" y="2" width="3" height="2" fill="#3ab03a"/><rect x="13" y="4" width="3" height="2" fill="#d03030"/><rect x="21" y="5" width="3" height="2" fill="#2a80d0"/>
<path d="M1 9 H32 V29 H1 Z" fill="#f4e0a8" stroke="#c0a050" stroke-width=".8"/>
<path d="M6 29 V18 H27 V29 H22 V22 H11 V29 Z" fill="#7ab8e0" stroke="#4a88c0" stroke-width=".8"/>
</svg>
<!-- calc -->
<svg class="a" style="left:139px;top:1045px" width="24" height="31">
<rect x=".5" y=".5" width="22" height="30" rx="1" fill="#d8ecf8" stroke="#5a9ad0"/>
<rect x="3" y="3" width="17" height="7" fill="#fff" stroke="#7aaad0" stroke-width=".8"/>
<rect x="3" y="2" width="17" height="2" fill="#f0a030"/>
<text x="17" y="9.5" font-family="Liberation Sans" font-size="7" fill="#335" text-anchor="end">0</text>
<g fill="#fff" stroke="#6a9ac8" stroke-width=".6">
<rect x="3" y="13" width="3.5" height="3"/><rect x="8" y="13" width="3.5" height="3"/><rect x="13" y="13" width="3.5" height="3"/><rect x="18" y="13" width="2.5" height="3"/>
<rect x="3" y="18" width="3.5" height="3"/><rect x="8" y="18" width="3.5" height="3"/><rect x="13" y="18" width="3.5" height="3"/>
<rect x="3" y="23" width="3.5" height="3"/><rect x="8" y="23" width="3.5" height="3"/><rect x="13" y="23" width="3.5" height="3"/>
</g>
<rect x="18" y="18" width="2.5" height="8" fill="#f0b040"/>
</svg>
<!-- task buttons -->
<div class="a" style="left:184px;top:1041px;width:58px;height:38px;border:1px solid #6a6e74;border-radius:3px;background:linear-gradient(160deg,#5a5e64 0%,#3a3e44 40%,#1e2228 60%,#2a2e34 100%)"></div>
<div class="a" style="left:246px;top:1041px;width:58px;height:38px;border:1px solid #6a6e74;border-radius:3px;background:linear-gradient(160deg,#5a5e64 0%,#3a3e44 40%,#1e2228 60%,#2a2e34 100%)"></div>
<div class="a" style="left:308px;top:1041px;width:58px;height:38px;border:1px solid #6a6e74;border-radius:3px;background:linear-gradient(160deg,#5a5e64 0%,#3a3e44 40%,#1e2228 60%,#2a2e34 100%)"></div>
<div class="a" style="left:432px;top:1041px;width:58px;height:38px;border:1px solid #a0a4aa;border-radius:3px;background:linear-gradient(160deg,#c8ccd0 0%,#8a8e94 40%,#5a5e64 60%,#6a6e74 100%)"></div>
<div class="a" style="left:556px;top:1041px;width:58px;height:38px;border:1px solid #6a6e74;border-radius:3px;background:linear-gradient(160deg,#5a5e64 0%,#3a3e44 40%,#1e2228 60%,#2a2e34 100%)"></div>
<div class="a" style="left:618px;top:1041px;width:58px;height:38px;border:1px solid #6a6e74;border-radius:3px;background:linear-gradient(160deg,#5a5e64 0%,#3a3e44 40%,#1e2228 60%,#2a2e34 100%)"></div>
<div class="a" style="left:680px;top:1041px;width:58px;height:38px;border:1px solid #6a6e74;border-radius:3px;background:linear-gradient(160deg,#5a5e64 0%,#3a3e44 40%,#1e2228 60%,#2a2e34 100%)"></div>
<svg class="a" style="left:0;top:1040px" width="760" height="40" viewBox="0 1040 760 40">
<!-- firefox -->
<circle cx="212.5" cy="1060" r="15" fill="#2a5ab8"/>
<circle cx="214" cy="1058" r="9" fill="#3a90e0"/>
<path d="M197.5 1060 Q198 1048 206 1045 Q203 1052 208 1054 Q204 1060 210 1066 Q218 1070 224 1062 Q226 1070 218 1074 Q206 1078 199 1068 Z" fill="#f07020"/>
<path d="M197.5 1060 A15 15 0 0 0 227 1063 Q222 1075 210 1074 Q200 1072 197.5 1060 Z" fill="#e85a10"/>
<!-- spotify -->
<circle cx="275" cy="1060" r="15" fill="#84bd00"/>
<path d="M265 1054 Q275 1050 285 1055 M266 1060 Q275 1057 284 1061 M267 1065.5 Q275 1063 283 1066.5" stroke="#111" stroke-width="2.6" fill="none" stroke-linecap="round"/>
<!-- paint -->
<path d="M320 1064 Q318 1050 334 1048 Q350 1047 350 1056 Q350 1061 343 1060 Q338 1060 340 1066 Q342 1073 330 1072 Q321 1071 320 1064 Z" fill="#e8eef4" stroke="#8a9aa8" stroke-width=".8"/>
<circle cx="327" cy="1061" r="2.2" fill="#3a88d8"/><circle cx="331" cy="1055" r="2.2" fill="#e03030"/><circle cx="338" cy="1052" r="2.2" fill="#f0c020"/><circle cx="344" cy="1054" r="2" fill="#40b040"/>
<circle cx="333" cy="1065" r="2" fill="#222"/>
<path d="M336 1076 L352 1047" stroke="#e08a20" stroke-width="3"/><path d="M349 1051 L354 1043" stroke="#c8a060" stroke-width="3"/>
<!-- mona lisa -->
<rect x="383" y="1044" width="32" height="31" fill="#6a6030" stroke="#2ab02a" stroke-width="1.5"/>
<ellipse cx="399" cy="1058" rx="7" ry="9" fill="#c8a860"/><path d="M388 1075 Q390 1064 399 1066 Q408 1064 410 1075 Z" fill="#3a2a18"/>
<path d="M391 1060 Q391 1048 399 1048 Q407 1048 407 1060 L405 1052 Q399 1046 393 1052 Z" fill="#2a2010"/>
<!-- inventor -->
<rect x="445" y="1043" width="32" height="32" fill="#f0ede8"/>
<path d="M452 1046 H468 V1051 H463 V1063 H468 V1069 H451 V1063 H456 V1051 H452 Z" fill="#f07a20"/>
<path d="M456 1051 L463 1058 V1063 L456 1056 Z" fill="#c05a10"/>
<text x="471" y="1073.5" font-family="Liberation Sans" font-weight="bold" font-size="6.5" fill="#333" text-anchor="middle">PRO</text>
<!-- vbox -->
<path d="M507 1050 L532 1045 L539 1070 L512 1075 Z" fill="#e0e4ea" stroke="#a0a8b0" stroke-width="1"/>
<path d="M513 1053 L532 1050 L535 1065 L516 1068 Z" fill="#2a48b0"/><path d="M515 1055 L531 1052 L533 1063 L518 1066 Z" fill="#50a0f0" opacity=".6"/>
<rect x="515" y="1053" width="4" height="14" fill="#f0d040" opacity=".8"/>
<!-- skype -->
<circle cx="585" cy="1059" r="14" fill="#1ea0e8"/><circle cx="575" cy="1049" r="6.5" fill="#1ea0e8"/><circle cx="595" cy="1069" r="6.5" fill="#1ea0e8"/>
<text x="585" y="1067" font-family="Liberation Sans" font-weight="bold" font-size="22" fill="#fff" text-anchor="middle">S</text>
<!-- telegram -->
<circle cx="647" cy="1059.5" r="14" fill="#2ea0e0"/>
<path d="M638 1059 L656 1051 L650 1068 L647 1061 Z" fill="#fff"/>
<!-- notepad -->
<path d="M694 1070 L706 1046 L725 1052 L720 1076 Z" fill="#8cd0e8" stroke="#5a9ab8" stroke-width=".8"/>
<path d="M716 1050 L724 1052 L720 1076 L712 1073 Z" fill="#c8b070"/>
<path d="M706 1046 L725 1052 L724 1055 L705 1049 Z" fill="#d8d8d8"/>
</svg>
<!-- tray -->
<svg class="a" style="left:1710px;top:1046px" width="120" height="28">
<path d="M4 15 L8 11 L12 15 Z" fill="#fff"/>
<g fill="#fff"><path d="M26 8 L32 7 V13 H26 Z"/><path d="M33 7 L40 6 V13 H33 Z"/><path d="M26 14 H32 V20 L26 19 Z"/><path d="M33 14 H40 V21 L33 20 Z"/></g>
<path d="M49 11 H52 L56 7 V21 L52 17 H49 Z" fill="#eee"/><path d="M58 10 Q60 14 58 18 M61 8 Q64 14 61 20" stroke="#ddd" fill="none" stroke-width="1.2"/>
<rect x="74.5" y="9.5" width="12" height="9" fill="none" stroke="#eee" stroke-width="1.3"/><rect x="78" y="19" width="5" height="2" fill="#eee"/>
<path d="M73 6 V14 M71 6 H75" stroke="#eee" stroke-width="1.2"/>
<path d="M98 5 V22" stroke="#eee" stroke-width="1.5"/><path d="M98 6 H107 L105 9 L108 12 H98 Z" fill="#eee"/>
<circle cx="108" cy="17" r="4.5" fill="#e02020"/><path d="M106 15 L110 19 M110 15 L106 19" stroke="#fff" stroke-width="1.2"/>
</svg>
<div class="a" style="left:1853px;top:1045px;font-size:11.6px;color:#fff;line-height:15px">22:58</div>
<div class="a" style="left:1840px;top:1062px;font-size:11.6px;color:#fff;line-height:15px">07.07.2015</div>
<div class="a" style="left:1906px;top:1041px;width:13px;height:39px;border:1px solid #5a5e64;background:linear-gradient(90deg,#2a2e34,#4a4e54)"></div>

</body></html>
